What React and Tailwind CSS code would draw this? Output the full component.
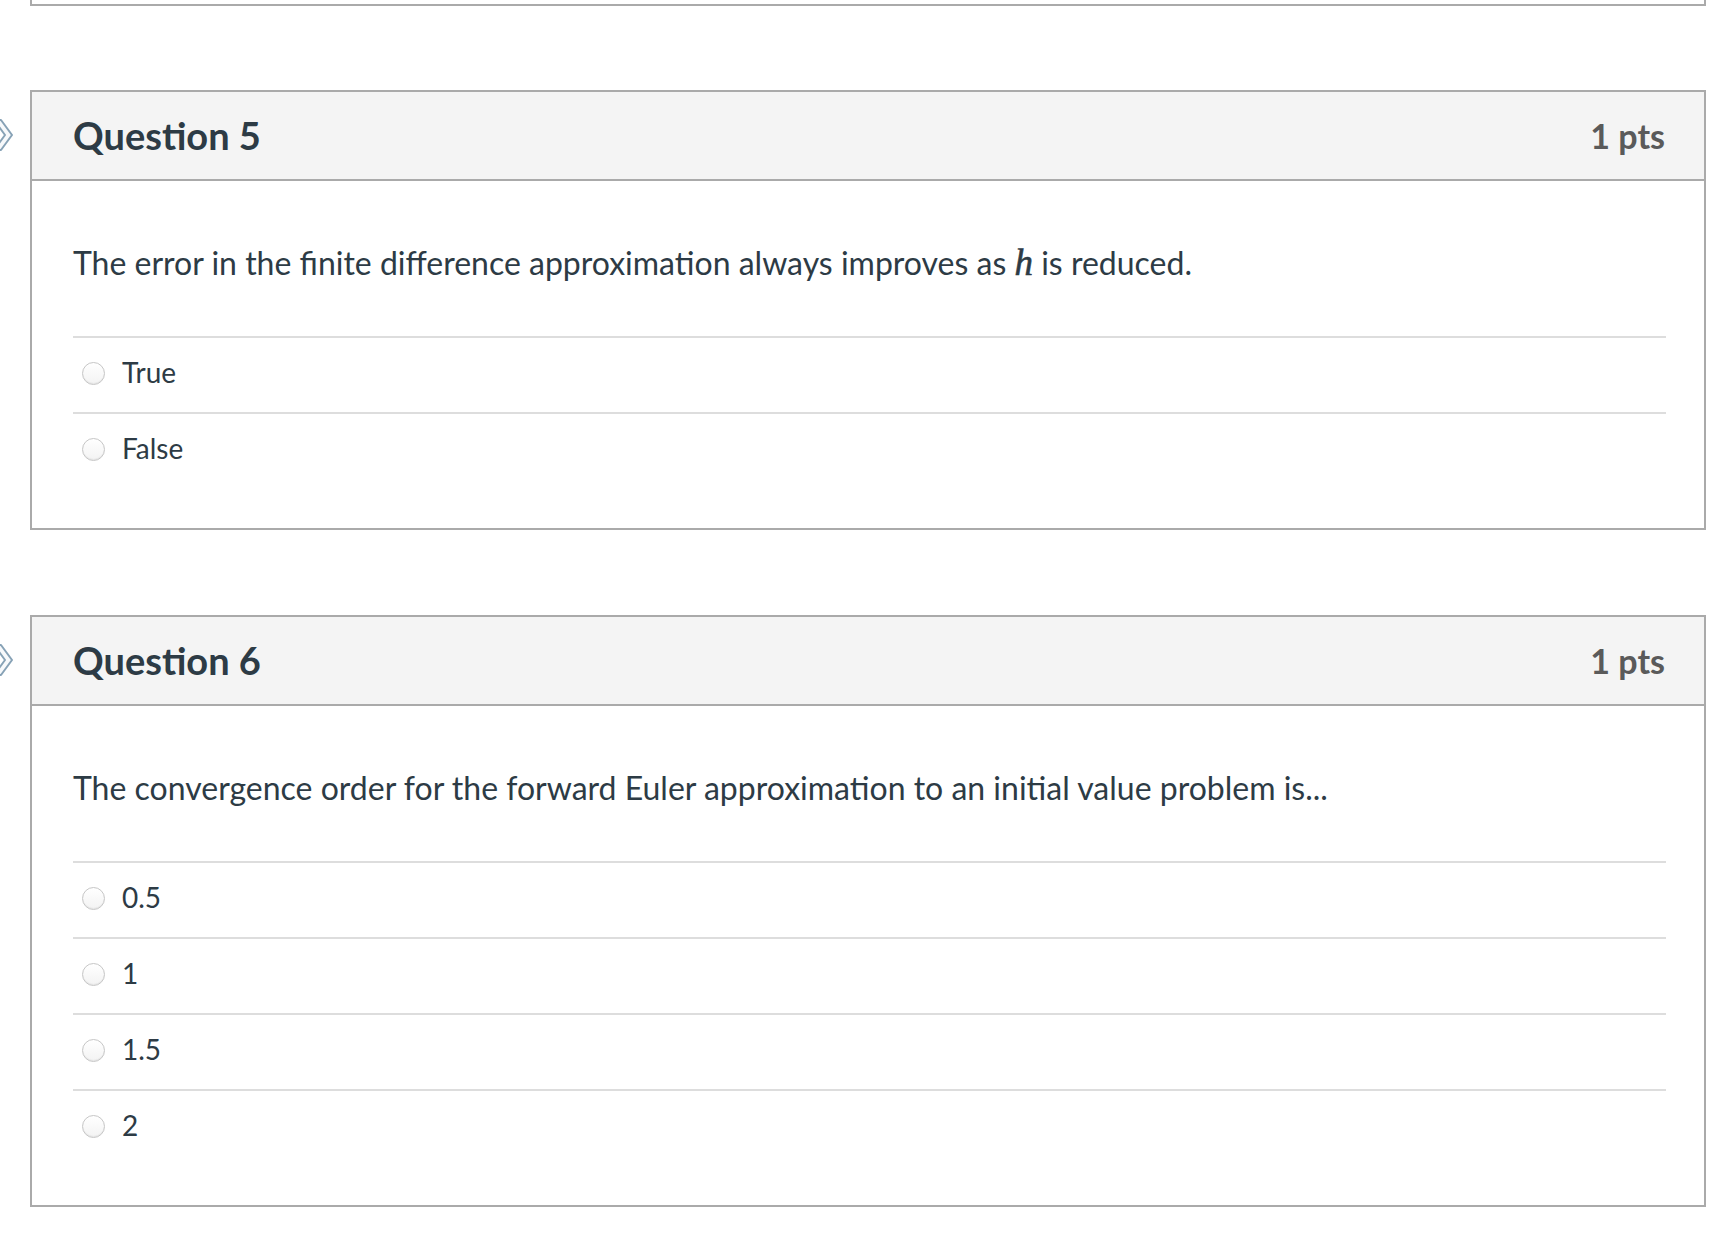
import { useState } from 'react';

const QUESTIONS = [
  {
    id: 5,
    points: 1,
    text: (
      <>
        The error in the finite difference approximation always improves as{' '}
        <span className="italic text-[37px] leading-none [-webkit-text-stroke:0.6px_#2d3b45]" style={{ fontFamily: '"Liberation Serif", serif' }}>h</span> is reduced.
      </>
    ),
    answers: ['True', 'False']
  },
  {
    id: 6,
    points: 1,
    text: 'The convergence order for the forward Euler approximation to an initial value problem is...',
    answers: ['0.5', '1', '1.5', '2']
  }
];

function Chevron() {
  return (
    <svg width="14" height="32" viewBox="0 0 14 32">
      <path d="M-6 1 L1 1 L12 16 L1 31 L-6 31 L5 16 Z" fill="#f7f9fb" stroke="#87a2b6" strokeWidth="2" strokeLinejoin="round" />
    </svg>
  );
}

function Radio({ checked, onClick }) {
  return (
    <button
      onClick={onClick}
      className="w-[23px] h-[23px] rounded-full border border-[#c6c6c6] bg-gradient-to-b from-[#ffffff] to-[#f3f3f3] shadow-[inset_0_-1px_1px_rgba(0,0,0,0.06)] flex items-center justify-center shrink-0"
    >
      {checked && <span className="w-[10px] h-[10px] rounded-full bg-[#2d3b45]" />}
    </button>
  );
}

function Question({ q }) {
  const [selected, setSelected] = useState(null);
  return (
    <div className="flex">
      <div className="w-[30px] h-[90px] flex items-center overflow-hidden">
        <Chevron />
      </div>
      <div className="w-[1676px] border-2 border-[#aaaaaa]">
        {/* Header */}
        <div className="h-[89px] bg-[#f4f4f4] border-b-2 border-[#aaaaaa] flex items-center justify-between pl-[41px] pr-[39px]">
          <h2 className="text-[38px] font-bold text-[#2d3b45]">Question {q.id}</h2>
          <span className="text-[34px] font-bold text-[#5a5a5a]">{q.points} pts</span>
        </div>
        {/* Body */}
        <div className="pl-[41px] pr-[38px] pt-[58px] pb-[40px]">
          <p className="text-[32px] leading-[48px] text-[#2d3b45] mb-[49px]">{q.text}</p>
          <div>
            {q.answers.map((a, i) => (
              <div key={a} className="h-[76px] border-t-2 border-[#dddddd] flex items-center gap-[17px] pl-[9px] pb-[3px]">
                <Radio checked={selected === i} onClick={() => setSelected(i)} />
                <span className="text-[28px] leading-[34px] text-[#2d3b45] mb-[3px]">{a}</span>
              </div>
            ))}
          </div>
        </div>
      </div>
    </div>
  );
}

export default function App() {
  return (
    <div className="min-h-screen bg-white" style={{ fontFamily: 'Lato, "Liberation Sans", sans-serif' }}>
      {/* tail of the previous question */}
      <div className="ml-[30px] w-[1676px] h-[6px] border-2 border-t-0 border-[#aaaaaa]" />
      <div className="flex flex-col gap-[85px] pt-[84px]">
        {QUESTIONS.map(q => <Question key={q.id} q={q} />)}
      </div>
    </div>
  );
}
